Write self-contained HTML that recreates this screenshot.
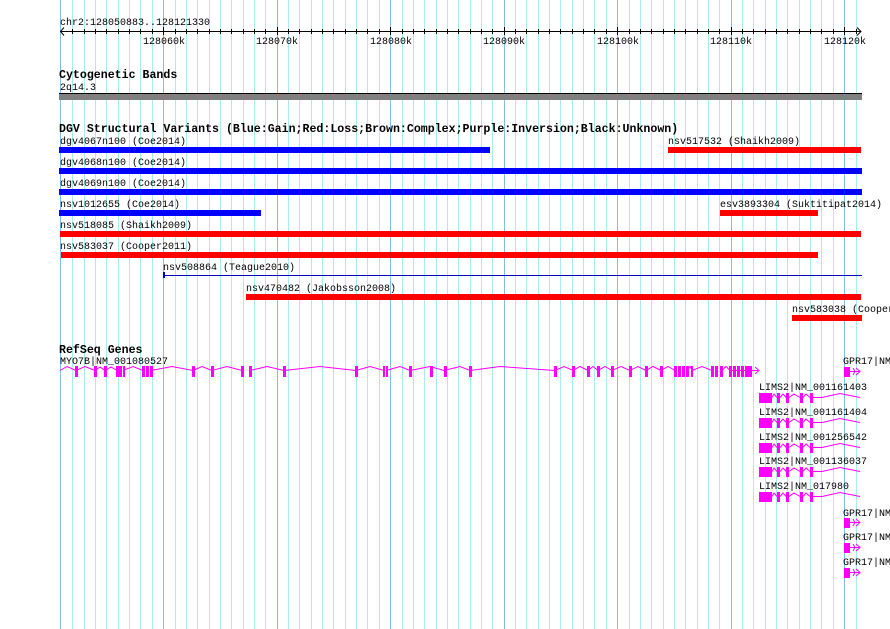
<!DOCTYPE html>
<html><head><meta charset="utf-8"><style>
html,body{margin:0;padding:0;background:#fff;width:890px;height:629px;overflow:hidden}
svg{display:block}
text{font-family:"Liberation Mono",monospace;font-size:10px;fill:#000}
.h{font-weight:bold;font-size:11.6px}
</style></head><body>
<svg width="890" height="629" xmlns="http://www.w3.org/2000/svg">
<g stroke="#a8ecf2" stroke-width="1">
<line x1="72.5" y1="0" x2="72.5" y2="629"/><line x1="84.5" y1="0" x2="84.5" y2="629"/><line x1="95.5" y1="0" x2="95.5" y2="629"/><line x1="106.5" y1="0" x2="106.5" y2="629"/><line x1="118.5" y1="0" x2="118.5" y2="629"/><line x1="129.5" y1="0" x2="129.5" y2="629"/><line x1="140.5" y1="0" x2="140.5" y2="629"/><line x1="152.5" y1="0" x2="152.5" y2="629"/>
<line x1="175.5" y1="0" x2="175.5" y2="629"/><line x1="186.5" y1="0" x2="186.5" y2="629"/><line x1="197.5" y1="0" x2="197.5" y2="629"/><line x1="209.5" y1="0" x2="209.5" y2="629"/><line x1="220.5" y1="0" x2="220.5" y2="629"/><line x1="231.5" y1="0" x2="231.5" y2="629"/><line x1="243.5" y1="0" x2="243.5" y2="629"/><line x1="254.5" y1="0" x2="254.5" y2="629"/><line x1="265.5" y1="0" x2="265.5" y2="629"/>
<line x1="288.5" y1="0" x2="288.5" y2="629"/><line x1="299.5" y1="0" x2="299.5" y2="629"/><line x1="311.5" y1="0" x2="311.5" y2="629"/><line x1="322.5" y1="0" x2="322.5" y2="629"/><line x1="333.5" y1="0" x2="333.5" y2="629"/><line x1="345.5" y1="0" x2="345.5" y2="629"/><line x1="356.5" y1="0" x2="356.5" y2="629"/><line x1="367.5" y1="0" x2="367.5" y2="629"/><line x1="379.5" y1="0" x2="379.5" y2="629"/>
<line x1="402.5" y1="0" x2="402.5" y2="629"/><line x1="413.5" y1="0" x2="413.5" y2="629"/><line x1="424.5" y1="0" x2="424.5" y2="629"/><line x1="436.5" y1="0" x2="436.5" y2="629"/><line x1="447.5" y1="0" x2="447.5" y2="629"/><line x1="458.5" y1="0" x2="458.5" y2="629"/><line x1="470.5" y1="0" x2="470.5" y2="629"/><line x1="481.5" y1="0" x2="481.5" y2="629"/><line x1="492.5" y1="0" x2="492.5" y2="629"/>
<line x1="515.5" y1="0" x2="515.5" y2="629"/><line x1="526.5" y1="0" x2="526.5" y2="629"/><line x1="538.5" y1="0" x2="538.5" y2="629"/><line x1="549.5" y1="0" x2="549.5" y2="629"/><line x1="560.5" y1="0" x2="560.5" y2="629"/><line x1="572.5" y1="0" x2="572.5" y2="629"/><line x1="583.5" y1="0" x2="583.5" y2="629"/><line x1="594.5" y1="0" x2="594.5" y2="629"/><line x1="606.5" y1="0" x2="606.5" y2="629"/>
<line x1="629.5" y1="0" x2="629.5" y2="629"/><line x1="640.5" y1="0" x2="640.5" y2="629"/><line x1="651.5" y1="0" x2="651.5" y2="629"/><line x1="663.5" y1="0" x2="663.5" y2="629"/><line x1="674.5" y1="0" x2="674.5" y2="629"/><line x1="685.5" y1="0" x2="685.5" y2="629"/><line x1="697.5" y1="0" x2="697.5" y2="629"/><line x1="708.5" y1="0" x2="708.5" y2="629"/><line x1="719.5" y1="0" x2="719.5" y2="629"/>
<line x1="742.5" y1="0" x2="742.5" y2="629"/><line x1="753.5" y1="0" x2="753.5" y2="629"/><line x1="765.5" y1="0" x2="765.5" y2="629"/><line x1="776.5" y1="0" x2="776.5" y2="629"/><line x1="787.5" y1="0" x2="787.5" y2="629"/><line x1="799.5" y1="0" x2="799.5" y2="629"/><line x1="810.5" y1="0" x2="810.5" y2="629"/><line x1="821.5" y1="0" x2="821.5" y2="629"/><line x1="833.5" y1="0" x2="833.5" y2="629"/>
<line x1="856.5" y1="0" x2="856.5" y2="629"/>
</g>
<g stroke="#84bde6" stroke-width="1">
<line x1="60.5" y1="0" x2="60.5" y2="629"/><line x1="163.5" y1="0" x2="163.5" y2="629"/><line x1="277.5" y1="0" x2="277.5" y2="629"/><line x1="390.5" y1="0" x2="390.5" y2="629"/><line x1="504.5" y1="0" x2="504.5" y2="629"/><line x1="617.5" y1="0" x2="617.5" y2="629"/><line x1="731.5" y1="0" x2="731.5" y2="629"/><line x1="844.5" y1="0" x2="844.5" y2="629"/>
</g>
<text x="60" y="25">chr2:128050883..128121330</text>
<g stroke="#000" stroke-width="1" fill="none">
<line x1="60" y1="31.5" x2="861" y2="31.5"/>
<path d="M64 27.5 L60.5 31.5 L64 35.5 M857 27.5 L861 31.5 L857 35.5"/>
<path d="M72.5 29v5M84.5 29v5M95.5 29v5M106.5 29v5M118.5 29v5M129.5 29v5M140.5 29v5M152.5 29v5M175.5 29v5M186.5 29v5M197.5 29v5M209.5 29v5M220.5 29v5M231.5 29v5M243.5 29v5M254.5 29v5M265.5 29v5M288.5 29v5M299.5 29v5M311.5 29v5M322.5 29v5M333.5 29v5M345.5 29v5M356.5 29v5M367.5 29v5M379.5 29v5M402.5 29v5M413.5 29v5M424.5 29v5M436.5 29v5M447.5 29v5M458.5 29v5M470.5 29v5M481.5 29v5M492.5 29v5M515.5 29v5M526.5 29v5M538.5 29v5M549.5 29v5M560.5 29v5M572.5 29v5M583.5 29v5M594.5 29v5M606.5 29v5M629.5 29v5M640.5 29v5M651.5 29v5M663.5 29v5M674.5 29v5M685.5 29v5M697.5 29v5M708.5 29v5M719.5 29v5M742.5 29v5M753.5 29v5M765.5 29v5M776.5 29v5M787.5 29v5M799.5 29v5M810.5 29v5M821.5 29v5M833.5 29v5M856.5 29v5"/>
<path d="M163.5 27v8M277.5 27v8M390.5 27v8M504.5 27v8M617.5 27v8M731.5 27v8M844.5 27v8"/>
</g>
<g text-anchor="middle">
<text x="164" y="44">128060k</text><text x="277" y="44">128070k</text><text x="391" y="44">128080k</text><text x="504" y="44">128090k</text><text x="618" y="44">128100k</text><text x="731" y="44">128110k</text><text x="845" y="44">128120k</text>
</g>
<text class="h" x="59" y="78">Cytogenetic Bands</text>
<text x="60" y="90">2q14.3</text>
<rect x="59" y="93" width="803" height="1" fill="#000"/>
<rect x="59" y="94" width="803" height="6" fill="#808080"/>
<text class="h" x="59" y="132">DGV Structural Variants (Blue:Gain;Red:Loss;Brown:Complex;Purple:Inversion;Black:Unknown)</text>
<text x="60" y="144">dgv4067n100 (Coe2014)</text>
<rect x="59" y="147" width="431" height="6" fill="#0000ff"/>
<text x="668" y="144">nsv517532 (Shaikh2009)</text>
<rect x="668" y="147" width="193" height="6" fill="#ff0000"/>
<text x="60" y="165">dgv4068n100 (Coe2014)</text>
<rect x="59" y="168" width="803" height="6" fill="#0000ff"/>
<text x="60" y="186">dgv4069n100 (Coe2014)</text>
<rect x="59" y="189" width="803" height="6" fill="#0000ff"/>
<text x="60" y="207">nsv1012655 (Coe2014)</text>
<rect x="59" y="210" width="202" height="6" fill="#0000ff"/>
<text x="720" y="207">esv3893304 (Suktitipat2014)</text>
<rect x="720" y="210" width="98" height="6" fill="#ff0000"/>
<text x="60" y="228">nsv518085 (Shaikh2009)</text>
<rect x="60" y="231" width="801" height="6" fill="#ff0000"/>
<text x="60" y="249">nsv583037 (Cooper2011)</text>
<rect x="61" y="252" width="757" height="6" fill="#ff0000"/>
<text x="163" y="270">nsv508864 (Teague2010)</text>
<rect x="163" y="275" width="699" height="1" fill="#0000c0"/>
<rect x="163" y="272" width="2" height="6" fill="#0000c0"/>
<text x="246" y="291">nsv470482 (Jakobsson2008)</text>
<rect x="246" y="294" width="615" height="6" fill="#ff0000"/>
<text x="792" y="312">nsv583038 (Cooper2011)</text>
<rect x="792" y="315" width="70" height="6" fill="#ff0000"/>
<text class="h" x="59" y="353">RefSeq Genes</text>
<text x="60" y="364">MYO7B|NM_001080527</text>
<g fill="none" stroke="#ff00ff" stroke-width="1">
<path d="M60 370.5 L67 366.5 L76 370.5 L85 366.5 L95 370.5 L100 367 L105 370.5 L111 367 L117 370.5 M123 370.5 L133 366.5 L143 370.5 M151 370.5 L172 366.5 L193 370.5 L202 366.5 L212 370.5 L227 366.5 L242 370.5 M250 370.5 L267 366.5 L284 370.5 L320 366.5 L356 370.5 L370 366.5 L384 370.5 M386 370.5 L400 366.5 L410 370.5 L430 366.5 L444 370.5 L460 366.5 L470 370.5 L500 366.5 L555 370.5 L564 366.5 L573 370.5 L580 366.5 L588 370.5 L593 366.5 L598 370.5 L605 366.5 L612 370.5 L621 366.5 L630 370.5 L638 366.5 L646 370.5 L653 366.5 L661 370.5 L668 366.5 L675 370.5 M687 370.5 L690 366.5 L692 370.5 L702 366.5 L712 370.5 M722 370.5 L726 366.5 L730 370.5 L758 370.5 M755 367 L759 370.5 L755 374"/>
</g>
<g fill="#ff00ff">
<rect x="75" y="366" width="3" height="11"/><rect x="94" y="366" width="3" height="11"/><rect x="104" y="366" width="3" height="11"/><rect x="116" y="366" width="3" height="11"/><rect x="119" y="366" width="3" height="11"/><rect x="123" y="366" width="2" height="11"/><rect x="142" y="366" width="3" height="11"/><rect x="146" y="366" width="3" height="11"/><rect x="150" y="366" width="3" height="11"/><rect x="192" y="366" width="3" height="11"/><rect x="211" y="366" width="3" height="11"/><rect x="241" y="366" width="3" height="11"/><rect x="249" y="366" width="3" height="11"/><rect x="283" y="366" width="3" height="11"/><rect x="355" y="366" width="3" height="11"/><rect x="383" y="366" width="2" height="11"/><rect x="386" y="366" width="2" height="11"/><rect x="409" y="366" width="3" height="11"/><rect x="430" y="366" width="3" height="11"/><rect x="444" y="366" width="3" height="11"/><rect x="469" y="366" width="3" height="11"/><rect x="554" y="366" width="3" height="11"/><rect x="572" y="366" width="3" height="11"/><rect x="587" y="366" width="3" height="11"/><rect x="597" y="366" width="3" height="11"/><rect x="611" y="366" width="3" height="11"/><rect x="629" y="366" width="3" height="11"/><rect x="645" y="366" width="3" height="11"/><rect x="660" y="366" width="3" height="11"/><rect x="674" y="366" width="3" height="11"/><rect x="678" y="366" width="3" height="11"/><rect x="682" y="366" width="3" height="11"/><rect x="686" y="366" width="3" height="11"/><rect x="691" y="366" width="2" height="11"/><rect x="711" y="366" width="3" height="11"/><rect x="715" y="366" width="3" height="11"/><rect x="720" y="366" width="3" height="11"/><rect x="729" y="366" width="3" height="11"/><rect x="733" y="366" width="3" height="11"/><rect x="737" y="366" width="3" height="11"/><rect x="741" y="366" width="3" height="11"/><rect x="745" y="366" width="7" height="11"/>
</g>
<text x="843" y="364">GPR17|NM</text>
<g id="gp"><rect x="844" y="367" width="6" height="10" fill="#ff00ff"/><path d="M850 371.5 L860 371.5 M856 368 L860 371.5 L856 375 M853 368 L855 371.5 L853 375" stroke="#ff00ff" fill="none"/></g>
<g id="lm">
<rect x="759" y="393" width="13" height="10" fill="#ff00ff"/>
<rect x="777" y="393" width="3" height="10" fill="#ff00ff"/><rect x="786" y="393" width="3" height="10" fill="#ff00ff"/><rect x="800" y="393" width="3" height="10" fill="#ff00ff"/><rect x="810" y="393" width="3" height="10" fill="#ff00ff"/>
<path d="M772 397.5 L774 394 L777 397.5 M780 397.5 L783 394 L786 397.5 M789 397.5 L794 394 L800 397.5 M803 397.5 L806 394 L810 397.5 M813 397.5 L822 397.5 L840 393.5 L860 397.5" stroke="#ff00ff" fill="none"/>
</g>
<text x="759" y="390">LIMS2|NM_001161403</text>
<text x="759" y="415">LIMS2|NM_001161404</text>
<use href="#lm" y="25"/>
<text x="759" y="440">LIMS2|NM_001256542</text>
<use href="#lm" y="50"/>
<text x="759" y="464">LIMS2|NM_001136037</text>
<use href="#lm" y="74"/>
<text x="759" y="489">LIMS2|NM_017980</text>
<use href="#lm" y="99"/>
<text x="843" y="516">GPR17|NM</text>
<use href="#gp" y="151"/>
<text x="843" y="540">GPR17|NM</text>
<use href="#gp" y="176"/>
<text x="843" y="565">GPR17|NM</text>
<use href="#gp" y="201"/>
</svg>
</body></html>
